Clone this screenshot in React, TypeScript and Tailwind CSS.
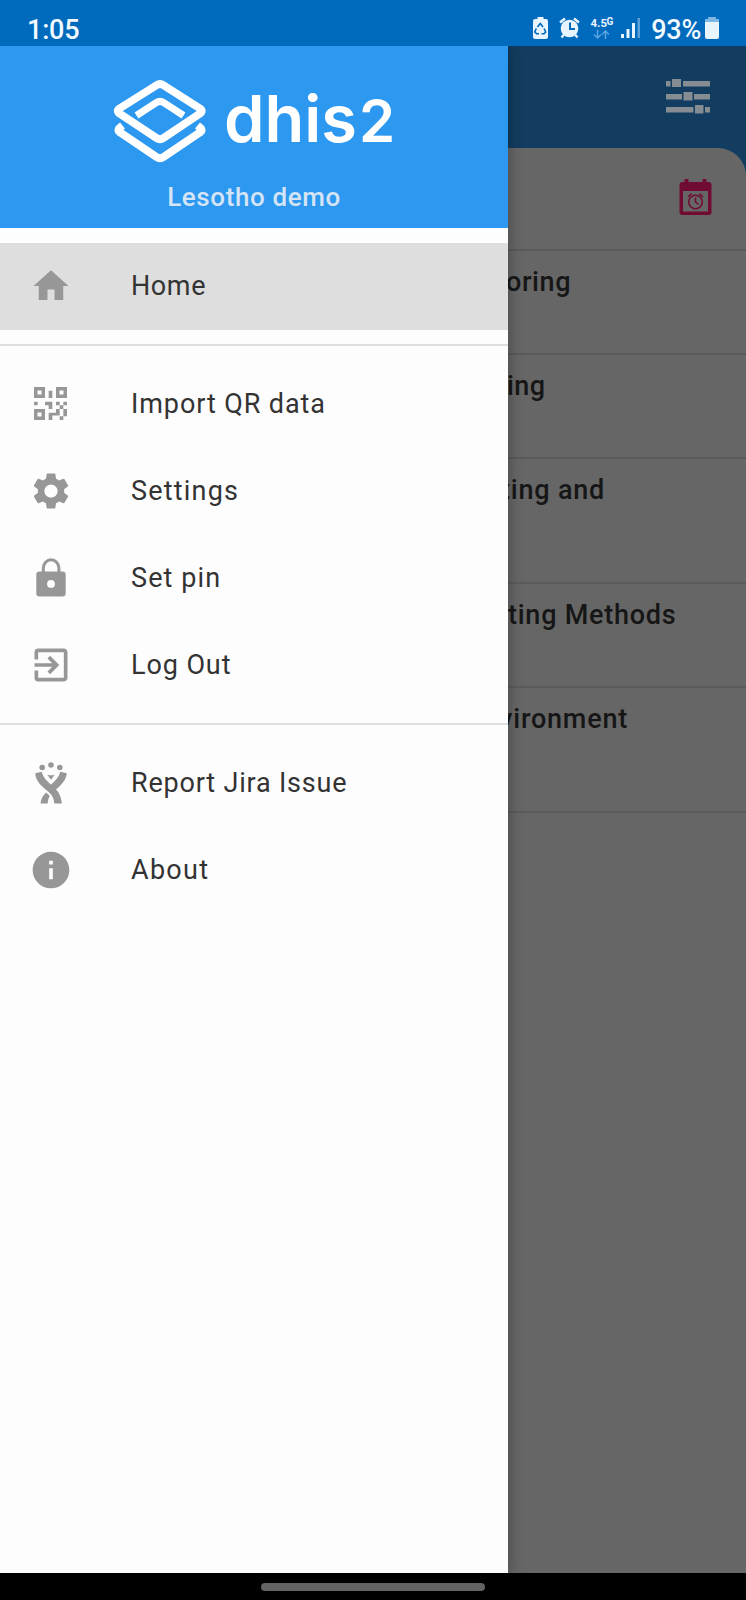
import React from "react";
import { MdHome, MdSettings, MdInfo, MdExitToApp } from "react-icons/md";

function LockIcon() {
  return (
    <svg width="44" height="44" viewBox="0 0 44 44" className="fill-[#979797]">
      <path d="M14.300 17v-5a7.800 8.200 0 0 1 15.600 0V17" fill="none" stroke="#979797" strokeWidth="3" />
      <path
        fillRule="evenodd"
        d="M10.500 15.500h23a3.200 3.200 0 0 1 3.200 3.200v18.600a3.200 3.200 0 0 1-3.200 3.200h-23a3.200 3.200 0 0 1-3.200-3.200V18.700a3.200 3.200 0 0 1 3.200-3.200ZM22 24a3.900 3.900 0 1 0 0 7.800 3.900 3.900 0 0 0 0-7.800Z"
      />
    </svg>
  );
}

function QrIcon() {
  return (
    <svg width="33" height="33" viewBox="0 0 18 18" className="fill-[#979797]">
      <path
        fillRule="evenodd"
        d="M0 0h6v6H0zM1.900 1.900v2.200h2.200V1.900zM12 0h6v6h-6zM13.900 1.900v2.200h2.200V1.900zM0 12h6v6H0zM1.900 13.900v2.200h2.200v-2.200zM8 2h2v4H8zM0 8h2v2H0zM6 8h4v4H8v-2H6zM12 8h2v2h-2zM16 8h2v2h-2zM14 10h2v2h-2zM12 12h2v3.500h-4V18H8v-4h4zM16 12h2v4h-2zM14 16h2v2h-2z"
      />
    </svg>
  );
}

function JiraIcon() {
  return (
    <svg width="34" height="42" viewBox="0 0 34 42" className="fill-[#979797]">
      <circle cx="8.200" cy="5.500" r="2.800" />
      <circle cx="17" cy="3" r="2.800" />
      <circle cx="25.800" cy="5.500" r="2.800" />
      <path d="M13.200 12.800q3.800 1 7.600 0L17 17.800z" />
      <path d="M1.200 11.300 7.700 9.700C9.200 15.500 13 19 18 23.500c6.500 6 9 9.500 9.800 18h-7.500c-.500-6.500-3-9.500-8-13.500C5.500 22.500 2 18.500 1.200 11.300Z" />
      <path d="M32.800 11.300 26.300 9.700c-1.200 5-4.500 8.500-9.800 13.300l5 5C28.500 22 32 18 32.800 11.300ZM12.200 30.500l3.600 3.400c-1.500 2.300-1.900 4.600-2.100 7.600H6.500c.400-4.500 2.200-8 5.700-11Z" />
    </svg>
  );
}

function Logo() {
  return (
    <svg width="94" height="84" viewBox="0 0 94 84" fill="none" stroke="white" strokeWidth="7.800">
      <path strokeLinejoin="round" d="M43.500 6.200q3.500-2.400 7 0L87 29.500q3.500 2.500 0 5L50.500 59q-3.500 2.400-7 0L6.500 34.500q-3.500-2.500 0-5Z" />
      <path d="m23.500 36.500 20-13q3.500-2.200 7 0l20 13" strokeWidth="7" />
      <path strokeLinejoin="round" d="M9.500 46.500 6.500 49q-2.500 2.200 0 4L43.500 78q3.500 2.400 7 0L87.500 53q2.500-1.800 0-4L84.500 46.500" />
    </svg>
  );
}

function Row({ icon, label, tracking, active }: { icon: React.ReactNode; label: string; tracking: string; active?: boolean }) {
  return (
    <div className={`flex h-[87px] items-center ${active ? "bg-[#dedede]" : ""}`}>
      <div className="flex w-[101px] justify-center pb-[2px] text-[#979797]">{icon}</div>
      <span className={`ml-[30px] whitespace-nowrap text-[27px] text-[#333] ${tracking}`}>{label}</span>
    </div>
  );
}

function StatusBar() {
  return (
    <div className="relative z-20 flex h-[46px] items-start bg-[#006abd] text-[#f2f9ff]">
      <span className="ml-[27px] mt-[14px] text-[27px] font-medium leading-[32px] tracking-[-0.2px]">1:05</span>
      <div className="ml-auto flex pr-[26px]">
        <svg width="118" height="46" viewBox="531 0 118 46" className="fill-[#e8f4ff]">
          <path d="M535 19h2.500v-2h6v2h2.500q2 0 2 2v16q0 2-2 2h-11q-2 0-2-2V21q0-2 2-2Z" />
          <path d="m537.500 27 2.800-3.500 2.700 3.500m1 1.500 1.700 3.500-1.700 1.800h-2.500m-2.500 0h-2.500l-1.700-2 1.500-3.300" fill="none" stroke="#006abd" strokeWidth="1.600" />
          <circle cx="569.500" cy="28.500" r="8.800" />
          <path d="m560 22.500 5-4m14 4-5-4M564 34.500l-2.500 3m13.500-3 2.500 3" stroke="#e8f4ff" strokeWidth="2.400" />
          <path d="M570 22.500V29h5" fill="none" stroke="#006abd" strokeWidth="2" />
          <text x="590.500" y="27" fontSize="11.500" fontWeight="700" fontFamily="Roboto, sans-serif">4.5</text>
          <text x="606.500" y="25" fontSize="10" fontWeight="700" fontFamily="Roboto, sans-serif">G</text>
          <path d="M597.500 30v8m-3.500-3.500 3.500 3.500 3.500-3.500M605.500 39v-8m-3.500 3.500 3.500-3.500 3.500 3.500" fill="none" stroke="#5aa5e2" strokeWidth="1.500" />
          <path d="M621 34h3v4h-3zM626.500 29h3v9h-3zM632 23h3v15h-3z" />
          <path d="M637.500 18h2.500v20h-2.500z" fill="#5aa0db" />
        </svg>
        <span className="ml-[2px] mt-[14px] text-[27px] font-medium leading-[32px] tracking-[-0.3px]">93%</span>
        <svg width="16" height="46" viewBox="0 0 16 46" className="ml-[3px]">
          <path d="M4 17h8v2h3v4H1v-4h3z" fill="#7db5e3" />
          <path d="M1 22h14v15q0 2-2 2H3q-2 0-2-2z" fill="#e8f4ff" />
        </svg>
      </div>
    </div>
  );
}

function Program({ label, height, shift }: { label: string; height: string; shift: string }) {
  return (
    <div className={`border-b-2 border-[#5b5b5b] pt-[15px] ${height}`}>
      <span className={`block whitespace-nowrap text-[27px] font-medium leading-[32px] text-[#161616] ${shift}`}>{label}</span>
    </div>
  );
}

export default function App() {
  return (
    <div className="flex h-[1600px] w-[746px] flex-col overflow-hidden bg-black font-['Roboto',sans-serif]">
      <StatusBar />
      <div className="flex h-[1527px] overflow-hidden">
        <aside className="z-10 w-[508px] shrink-0 bg-[#fdfdfd] shadow-[2px_0_12px_rgba(0,0,0,0.25)]">
          <header className="flex h-[182px] flex-col bg-[#2c98f0]">
            <div className="ml-[113px] mt-[33px] flex h-[84px] text-white">
              <Logo />
              <span className="ml-[17px] font-['Inter',sans-serif] text-[65px] font-semibold leading-[80px]">
                dhis<span className="ml-[2px] text-[58px]">2</span>
              </span>
            </div>
            <div className="mt-[18px] text-center text-[26px] font-medium leading-[32px] tracking-[0.6px] text-[#d5e4f5]">Lesotho demo</div>
          </header>
          <div className="pt-[15px] pb-[14px]">
            <Row active icon={<MdHome size={42} />} label="Home" tracking="tracking-[0.6px]" />
          </div>
          <div className="border-y-2 border-[#dedede] pt-[15px] pb-[14px]">
            <Row icon={<QrIcon />} label="Import QR data" tracking="tracking-[0.9px]" />
            <Row icon={<MdSettings size={44} />} label="Settings" tracking="tracking-[1.2px]" />
            <Row icon={<LockIcon />} label="Set pin" tracking="tracking-[1.1px]" />
            <Row icon={<MdExitToApp size={44} />} label="Log Out" tracking="tracking-[0.9px]" />
          </div>
          <div className="pt-[15px]">
            <Row icon={<JiraIcon />} label="Report Jira Issue" tracking="tracking-[0.8px]" />
            <Row icon={<MdInfo size={44} />} label="About" tracking="tracking-[1.3px]" />
          </div>
        </aside>
        <main className="flex min-w-0 grow flex-col bg-[#123d60]">
          <div className="flex h-[102px] justify-end pr-[36px] pt-[32px]">
            <svg width="44" height="36" viewBox="0 0 44 36" className="fill-[#858c92]">
              <path d="M0 3h4.500v5.500H0zM6 1h9v8H6zM17 3h27v5.500H17zM0 16h16v5.500H0zM17.500 14h9v8.500h-9zM28 16h16v5.500H28zM0 29h27.500v5.500H0zM29 27h8.500v8.500H29zM39 29h5v5.500h-5z" />
            </svg>
          </div>
          <div className="grow rounded-tr-[28px] bg-[#666]">
            <div className="flex h-[103px] justify-end border-b-2 border-[#5b5b5b] pr-[33px] pt-[30px]">
              <svg width="35" height="38" viewBox="0 0 34 38" className="fill-[#700b34]">
                <path fillRule="evenodd" d="M6 1h4v3h14V1h4v3h2q3 0 3 3v27q0 3-3 3H4q-3 0-3-3V7q0-3 3-3h2zM4.500 13v20.500h25V13z" />
                <g fill="none" stroke="#700b34" strokeWidth="1.600">
                  <circle cx="17" cy="24" r="6.800" />
                  <path d="M17 19.500V24l3 2.500M9.500 19l3.500-3.300M24.500 19 21 15.700" />
                </g>
              </svg>
            </div>
            <Program label="oring" height="h-[104px]" shift="-ml-[2px] tracking-[0.6px]" />
            <Program label="ing" height="h-[104px]" shift="-ml-[1px] tracking-[0.4px]" />
            <Program label="ting and" height="h-[125px]" shift="-ml-[7px] tracking-[0.8px]" />
            <Program label="ting Methods" height="h-[104px]" shift="ml-0 tracking-[0.75px]" />
            <Program label="vironment" height="h-[125px]" shift="-ml-[9px] tracking-[0.8px]" />
          </div>
        </main>
      </div>
      <div className="flex h-[27px] justify-center pt-[10px]">
        <div className="h-[8px] w-[224px] rounded-full bg-[#636363]" />
      </div>
    </div>
  );
}
